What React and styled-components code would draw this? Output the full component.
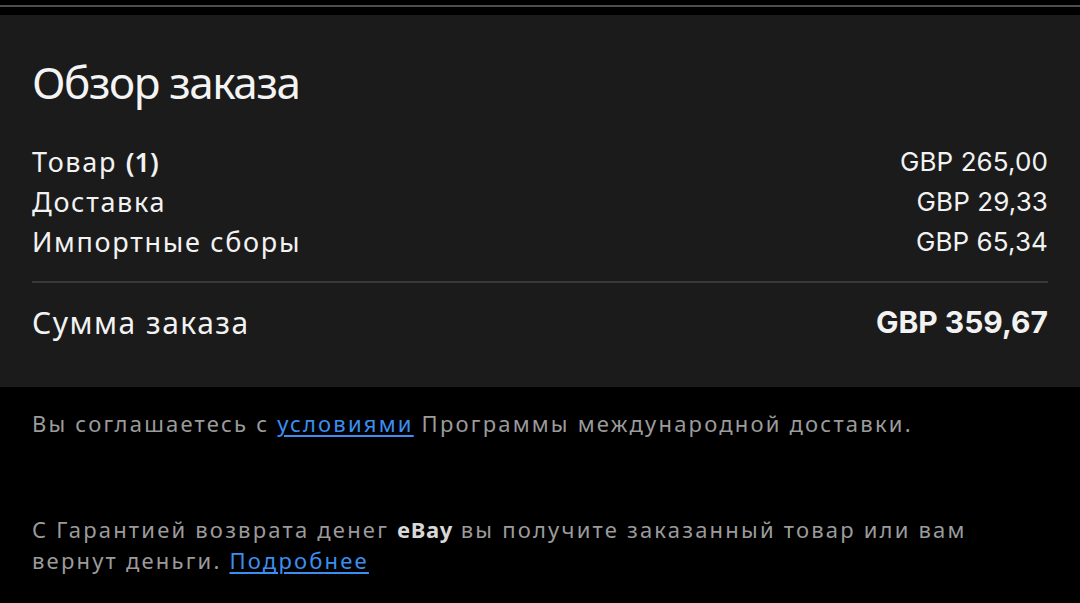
import React from "react";
import styled, { createGlobalStyle } from "styled-components";

const Global = createGlobalStyle`
  html, body { margin: 0; padding: 0; background: #000; }
  body { font-family: "Noto Sans", "DejaVu Sans", sans-serif; -webkit-font-smoothing: antialiased; }
`;

const Page = styled.div`
  width: 1080px;
  height: 603px;
  overflow: hidden;
  background: #000;
  display: flex;
  flex-direction: column;
`;

const TopStrip = styled.div`
  height: 15px;
  flex: none;
  display: flex;
  flex-direction: column;
  padding-top: 5px;
  box-sizing: border-box;
`;

const TopLine = styled.div`
  height: 2px;
  background: #4d4d4d;
`;

const Panel = styled.section`
  background: #1b1b1b;
  height: 372px;
  flex: none;
  box-sizing: border-box;
  padding: 0 32px;
  display: flex;
  flex-direction: column;
`;

const Title = styled.h1`
  margin: 42px 0 0;
  font-family: "Noto Sans", sans-serif;
  font-weight: 400;
  font-size: 44px;
  line-height: 50px;
  letter-spacing: -1.4px;
  color: #f4f4f4;
`;

const Rows = styled.div`
  margin-top: 34px;
  display: flex;
  flex-direction: column;
`;

const Row = styled.div`
  display: flex;
  justify-content: space-between;
  align-items: center;
  height: 40px;
  flex: none;
`;

const Label = styled.span`
  font-family: "Noto Sans", sans-serif;
  font-size: ${(p) => (p.$total ? 30 : 27)}px;
  font-weight: 400;
  letter-spacing: ${(p) => (p.$total ? 1.5 : 1.7)}px;
  color: #f2f2f2;
`;

const Strong = styled.span`
  font-weight: 600;
  letter-spacing: 0;
`;

const Amount = styled.span`
  font-family: Inter, "Liberation Sans", sans-serif;
  font-size: ${(p) => (p.$total ? 30 : 26)}px;
  font-weight: ${(p) => (p.$total ? 700 : 400)};
  letter-spacing: ${(p) => (p.$total ? 0 : 0.1)}px;
  color: #f2f2f2;
`;

const Divider = styled.hr`
  margin: 20px 0 19px;
  border: 0;
  height: 2px;
  flex: none;
  background: #383838;
`;

const Notes = styled.div`
  padding: 21px 32px 0;
  display: flex;
  flex-direction: column;
  gap: 75px;
`;

const Note = styled.p`
  margin: 0;
  font-family: "Noto Sans", sans-serif;
  font-size: 22px;
  line-height: 31px;
  letter-spacing: 2.2px;
  color: #9b9b9b;
`;

const Brand = styled.span`
  font-weight: 700;
  letter-spacing: 0.6px;
  color: #d8d8d8;
`;

const Link = styled.a`
  color: #3b8ff0;
  text-decoration: underline;
  text-underline-offset: 3px;
  text-decoration-thickness: 2px;
`;

export default function App() {
  return (
    <Page>
      <Global />
      <TopStrip>
        <TopLine />
      </TopStrip>
      <Panel>
        <Title>Обзор заказа</Title>
        <Rows>
          <Row>
            <Label>
              Товар <Strong>(1)</Strong>
            </Label>
            <Amount>GBP 265,00</Amount>
          </Row>
          <Row>
            <Label>Доставка</Label>
            <Amount>GBP 29,33</Amount>
          </Row>
          <Row>
            <Label>Импортные сборы</Label>
            <Amount>GBP 65,34</Amount>
          </Row>
        </Rows>
        <Divider />
        <Row>
          <Label $total>Сумма заказа</Label>
          <Amount $total>GBP 359,67</Amount>
        </Row>
      </Panel>
      <Notes>
        <Note>
          Вы соглашаетесь с <Link href="#">условиями</Link> Программы международной доставки.
        </Note>
        <Note>
          С Гарантией возврата денег <Brand>eBay</Brand> вы получите заказанный товар или вам
          <br />
          вернут деньги. <Link href="#">Подробнее</Link>
        </Note>
      </Notes>
    </Page>
  );
}
